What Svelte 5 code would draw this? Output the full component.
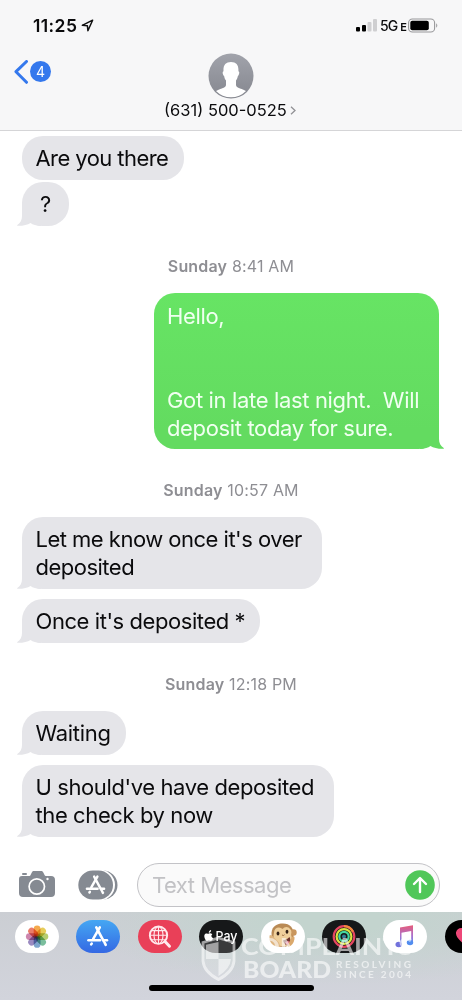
<script>
  const groups = [
    {
      day: '',
      time: '',
      messages: [
        { text: 'Are you there', width: 162, tail: false, spacing: -0.57 },
        { text: '?', width: 47, tail: true, center: true, spacing: 0 }
      ]
    },
    {
      day: 'Sunday',
      time: '8:41 AM',
      messages: [
        {
          text: 'Hello,\n\n\nGot in late last night.  Will\ndeposit today for sure.',
          width: 285,
          tail: true,
          sent: true,
          spacing: -0.35
        }
      ]
    },
    {
      day: 'Sunday',
      time: '10:57 AM',
      messages: [
        { text: "Let me know once it's over\ndeposited", width: 300, tail: true, spacing: -0.51 },
        { text: "Once it's deposited *", width: 238, tail: true, spacing: -0.43 }
      ]
    },
    {
      day: 'Sunday',
      time: '12:18 PM',
      messages: [
        { text: 'Waiting', width: 104, tail: true, spacing: -0.3 },
        { text: "U should've have deposited\nthe check by now", width: 312, tail: true, spacing: -0.4 }
      ]
    }
  ];

  const petals = ['#f29a2e', '#e3c53b', '#a9c455', '#63b38c', '#6797c4', '#8a76b6', '#c4709f', '#e76550'];
</script>

{#snippet storeGlyph()}
  <g fill="none" stroke="#fff" stroke-width="2.6" stroke-linecap="round">
    <path d="M9.3 1.5 16.8 15.5" />
    <path d="M12.8 1.5 6.2 13" />
    <path d="M1.5 14.5H13" />
    <path d="M17.2 14.5H20" />
    <path d="M4.2 18.6 4.7 17.8" />
    <path d="M17.7 17 18.7 19" />
  </g>
{/snippet}

<div class="phone">
  <header class="top">
    <div class="status">
      <div class="clock">
        <span>11:25</span>
        <svg width="13" height="13" viewBox="0 0 13 13">
          <path d="M1.3 6.3 11.6 1.2 6.9 11.7 6.4 6.7Z" fill="none" stroke="#111" stroke-width="1.5" stroke-linejoin="round" />
        </svg>
      </div>
      <div class="indicators">
        <svg class="signal" width="22" height="13" viewBox="0 0 22 13">
          <rect x="0" y="8" width="4" height="4.5" rx="1" />
          <rect x="6" y="6" width="4" height="6.5" rx="1" />
          <rect x="11.5" y="3" width="4" height="9.5" rx="1" fill="#cfcfd1" />
          <rect x="17" y="0" width="4" height="12.5" rx="1" fill="#cfcfd1" />
        </svg>
        <span class="network">5G<small>E</small></span>
        <svg class="battery" width="31" height="15" viewBox="0 0 31 15">
          <rect x=".6" y="1" width="26" height="13" rx="3.8" fill="none" stroke="#98989a" stroke-width="1.1" />
          <rect x="2.3" y="2.8" width="18.5" height="9.4" rx="2" />
          <path d="M28.2 5.2q2.2 2.2 0 4.6z" fill="#98989a" />
        </svg>
      </div>
    </div>
    <div class="contact-row">
      <div class="back">
        <svg width="15" height="24" viewBox="0 0 15 24">
          <path d="M12.5 1.5 2 11.7 12.5 22.3" fill="none" stroke="#3478ed" stroke-width="3" stroke-linecap="round" stroke-linejoin="round" />
        </svg>
        <span class="count">4</span>
      </div>
      <div class="contact">
        <svg width="46" height="46" viewBox="0 0 46 46">
          <defs>
            <linearGradient id="avatar" x2="0" y2="1">
              <stop offset="0" stop-color="#a1a3ab" />
              <stop offset="1" stop-color="#85878f" />
            </linearGradient>
            <clipPath id="avatarClip"><circle cx="23" cy="23" r="21.3" /></clipPath>
          </defs>
          <circle cx="23" cy="23" r="22.5" fill="url(#avatar)" />
          <path
            clip-path="url(#avatarClip)"
            fill="#fff"
            d="M23 9c5.5 0 7.8 3.3 7.4 9.2 1.4.4 1 3.4-.6 5-.4 2.3-1.2 3.4-1.8 4.3v4.3c0 2.5 2.3 3 5 4 3.5 1.2 6 2.5 7.2 4.2L34 47H12L5.8 40c1.2-1.7 3.7-3 7.2-4.2 2.7-1 5-1.5 5-4v-4.3c-.7-.9-1.5-2-1.8-4.3-1.7-1.6-2.1-4.6-.7-5C15.1 12.3 17.5 9 23 9Z"
          />
        </svg>
        <div class="number">
          <span>(631) 500-0525</span>
          <svg width="6" height="9" viewBox="0 0 6 9"><path d="m1 .8 4 3.7-4 3.7" fill="none" stroke="#919195" stroke-width="1.3" /></svg>
        </div>
      </div>
    </div>
  </header>

  <main class="thread">
    {#each groups as group}
      {#if group.day}
        <div class="stamp"><b>{group.day}</b> {group.time}</div>
      {/if}
      <div class="group" class:tight={!group.day}>
        {#each group.messages as message}
          <div
            class="bubble"
            class:sent={message.sent}
            class:center={message.center}
            style="width: {message.width}px; letter-spacing: {message.spacing}px"
          >{message.text}{#if message.tail}<svg class="tail" width="24" height="21" viewBox="0 0 24 21"><path d="M5 0v11C5 15 3.5 18 .3 20c-.4.5-.1.8.3.8 5.400.1 10-.8 12.900-2.800Q17 20.600 24 21V0Z" /></svg>{/if}</div>
        {/each}
      </div>
    {/each}
  </main>

  <div class="composer">
    <svg class="camera" width="36" height="28" viewBox="0 0 36 28">
      <path fill="#858a92" d="M3 6h7c1 0 1.3-.4 1.8-1.5l1-2C13.4 1.3 14 1 15 1h7c1 0 1.7.4 2.3 1.5l1 2C25.8 5.6 26.3 6 27.3 6H32q4 0 4 4v13q0 4-4 4H4q-4 0-4-4V9q0-3 3-3Z" />
      <rect x="3" y="3" width="5" height="2" rx="1" fill="#858a92" />
      <circle cx="17.8" cy="16.5" r="7.7" fill="none" stroke="#fff" stroke-width="1.7" />
      <circle cx="28.5" cy="9" r="1.2" fill="#fff" />
    </svg>
    <svg class="apps" width="40" height="30" viewBox="0 0 40 30">
      <rect x="4" y=".5" width="35.5" height="29" rx="14.5" fill="#858a92" />
      <rect x="0" y="-.5" width="37" height="31" rx="15.5" fill="#fff" />
      <rect x=".3" y=".5" width="34.7" height="29" rx="14.5" fill="#858a92" />
      <g transform="translate(7.5 5.2) scale(.93)">{@render storeGlyph()}</g>
    </svg>
    <div class="field">
      <span>Text Message</span>
      <svg width="30" height="30" viewBox="0 0 30 30">
        <circle cx="15" cy="15" r="14.8" fill="#50c759" />
        <path d="M15 22V8.5M9 14l6-6 6 6" fill="none" stroke="#fff" stroke-width="2.4" stroke-linecap="round" stroke-linejoin="round" />
      </svg>
    </div>
  </div>

  <footer class="drawer">
    <div class="strip">
      <svg class="app white" viewBox="0 0 44 33">
        <g class="petals">
          {#each petals as color, i}
            <rect x="18.7" y="5.4" width="6.8" height="11.2" rx="3.4" fill={color} transform="rotate({i * 45} 22.1 16.6)" />
          {/each}
        </g>
      </svg>
      <svg class="app store" viewBox="0 0 44 33">
        <g transform="translate(11 5.8)">{@render storeGlyph()}</g>
      </svg>
      <svg class="app search" viewBox="0 0 44 33">
        <g fill="none" stroke="#ffe9ec" stroke-width="1.1">
          <circle cx="20.5" cy="15.2" r="8.7" stroke-width="1.9" />
          <ellipse cx="20.5" cy="15.2" rx="4.5" ry="8.5" />
          <path d="M20.5 6.5v17.5M12 15.2h17M13.5 10.6h14M13.5 19.8h14" />
          <path d="m27 21.5 4.5 4.7" stroke-width="3" stroke-linecap="round" />
        </g>
      </svg>
      <svg class="app black" viewBox="0 0 44 33">
        <path fill="#fff" d="M13.3 14.3c-.9-.9-2.4-1.2-3.3-.7-.7.4-1.2.3-1.9 0-1.8-.7-3 .7-2.8 3 .2 2.1 1.5 4.3 2.7 4.3.7 0 1-.4 1.9-.4.8 0 1.1.4 1.8.4 1 0 1.9-1.4 2.4-2.7-2-.8-2.3-3-.8-3.9ZM9.8 12.9c-.1-1.6 1-2.7 2.3-2.9.1 1.5-.8 2.8-2.3 2.9Z" />
        <text x="16.5" y="21" textLength="22" lengthAdjust="spacingAndGlyphs" class="pay">Pay</text>
      </svg>
      <svg class="app white" viewBox="0 0 44 33">
        <path d="M10.500 13C11 6 16 3.500 22 3.500c7 0 10.500 4.500 10.500 10.500 0 7-3 12.500-10 13-7 .2-12-4-12-14Z" fill="#b98a55" />
        <circle cx="32.500" cy="12.500" r="3.200" fill="#c9965c" />
        <path d="M13 12.500q.5-5 5-5 2 0 3.500 1.500 2.500-3 6-1.500 4 2.500 2.500 7 2 5-1 9-4 3.500-9 2.500-6-1-7-7-1-3 0-6.500Z" fill="#efcf9b" />
        <ellipse cx="17" cy="13.500" rx="1.400" ry="2" fill="#332015" />
        <ellipse cx="26" cy="11.800" rx="1.400" ry="2" fill="#332015" />
        <path d="m21 15 1.500.5 1-.8" stroke="#9b6c43" fill="none" />
        <path d="M22 20.500q4-.5 6.500-3.500 2 4-.5 7.500-4 2-6-4Z" fill="#70352d" />
        <path d="M24 23q2-3 4.500-1.500 0 3-2 3.500Z" fill="#df7188" />
        <path d="M8.500 15.500q2-1.500 3.500 1l4 4q3 2 3 6.500-8 0-10.500-7Z" fill="#dfb682" />
        <path d="M31 17q3-2 2.500 2-1 6-6 8-2-1 0-3.500Z" fill="#dba96c" />
      </svg>
      <svg class="app black" viewBox="0 0 44 33">
        <g fill="none" stroke-width="2.2">
          <circle cx="22" cy="16.5" r="10.3" stroke="#e64561" />
          <path d="M22 6.200a10.300 10.300 0 0 1 9 5.500" stroke="#f38c3d" />
          <circle cx="22" cy="16.5" r="7.4" stroke="#d9e33f" />
          <circle cx="22" cy="16.5" r="4.7" stroke="#45d9a0" />
        </g>
        <circle cx="22" cy="16.5" r="2" fill="#347d9a" />
      </svg>
      <svg class="app white" viewBox="0 0 44 33">
        <defs>
          <linearGradient id="note" x2="0" y2="1">
            <stop offset="0" stop-color="#e75c79" />
            <stop offset=".55" stop-color="#a86fce" />
            <stop offset="1" stop-color="#548ff0" />
          </linearGradient>
        </defs>
        <g fill="url(#note)">
          <path d="M17 7.500 30 5.300v17h-1.800V11l-9.700 1.800v12H17Z" />
          <ellipse cx="15.7" cy="24.5" rx="3.2" ry="2.7" fill="#7272dc" />
          <ellipse cx="27" cy="22.5" rx="3.2" ry="2.7" fill="#528def" />
        </g>
      </svg>
      <svg class="app black pure" viewBox="0 0 44 33">
        <path d="M22 27C14 20 10.5 16.5 11 12.5c.6-5 7.5-6.500 11-1.500 3.500-5 10.400-3.500 11 1.500.5 4-3 7.500-11 14.500Z" fill="#ed4778" />
      </svg>
    </div>
    <div class="home"></div>
    <svg class="watermark" width="230" height="56" viewBox="0 0 230 56">
      <path d="M18.5 3 34 7.500V26Q33 37 18.500 44.500 4 37 3 26V7.500Z" fill="#fff" fill-opacity=".25" stroke="#fff" stroke-width="2.800" />
      <path d="M18.5 7v17H6V9.800ZM18.500 24H31q-1 10-12.500 17Z" fill="#fff" />
      <g class="mark">
        <text x="41" y="20" font-size="22" textLength="172" lengthAdjust="spacingAndGlyphs" class="slim">COMPLAINTS</text>
        <text x="43" y="43" font-size="23" textLength="88" lengthAdjust="spacingAndGlyphs">BOARD</text>
        <text x="136" y="32.500" font-size="10" textLength="75" class="slim">RESOLVING</text>
        <text x="136" y="43" font-size="10" textLength="75" class="slim">SINCE 2004</text>
      </g>
    </svg>
  </footer>
</div>

<style>
  :global(body) {
    margin: 0;
    background: #fff;
  }

  .phone {
    width: 462px;
    height: 1000px;
    overflow: hidden;
    display: flex;
    flex-direction: column;
    font-family: Inter, "Liberation Sans", sans-serif;
    color: #0b0b0d;
  }

  svg {
    display: block;
    flex-shrink: 0;
  }

  .top {
    box-sizing: border-box;
    height: 131px;
    flex-shrink: 0;
    background: #f7f7f8;
    border-bottom: 1px solid #d5d5d7;
  }

  .status {
    display: flex;
    justify-content: space-between;
    height: 52px;
    padding: 0 23px 0 33px;
  }

  .clock {
    display: flex;
    align-items: flex-start;
    gap: 4px;
    padding-top: 16px;
    font-size: 17.5px;
    line-height: 20px;
    font-weight: 600;
    letter-spacing: 0.4px;
  }

  .clock svg {
    margin-top: 3px;
  }

  .indicators {
    display: flex;
    align-items: flex-start;
    padding-top: 18px;
  }

  .signal {
    margin: 1px 2px 0 0;
  }

  .network {
    width: 28px;
    font-size: 14px;
    line-height: 16px;
    font-weight: 500;
    letter-spacing: -0.9px;
    white-space: nowrap;
  }

  .network small {
    font-size: 11px;
    font-weight: 600;
    margin-left: 3px;
  }

  .contact-row {
    display: grid;
    grid-template-columns: 80px 1fr 80px;
  }

  .back {
    display: flex;
    align-items: flex-start;
    gap: 1px;
    padding: 8px 0 0 14px;
  }

  .count {
    width: 21px;
    height: 21px;
    margin-top: 1px;
    border-radius: 50%;
    background: #3478ed;
    color: #fff;
    font-size: 14px;
    line-height: 21px;
    text-align: center;
  }

  .contact {
    display: flex;
    flex-direction: column;
    align-items: center;
  }

  .contact > svg {
    margin-top: 1px;
  }

  .number {
    display: flex;
    align-items: center;
    gap: 3px;
    margin: 1px 2px 0 0;
    font-size: 16.5px;
    line-height: 20px;
  }

  .thread {
    box-sizing: border-box;
    height: 726px;
    flex-shrink: 0;
    padding: 5px 22px 0;
  }

  .group {
    display: flex;
    flex-direction: column;
    align-items: flex-start;
    gap: 10px;
  }

  .group.tight {
    gap: 2px;
    margin-bottom: -1px;
  }

  .stamp {
    height: 68px;
    box-sizing: border-box;
    padding-top: 31px;
    text-align: center;
    font-size: 16px;
    line-height: 20px;
    letter-spacing: 0.18px;
    color: #8e8e93;
  }

  .stamp b {
    font-weight: 600;
  }

  .bubble {
    position: relative;
    z-index: 0;
    box-sizing: border-box;
    padding: 8px 13.5px;
    border-radius: 21px;
    background: #e5e5e9;
    font-size: 22px;
    line-height: 28px;
    white-space: pre;
  }

  .bubble.center {
    text-align: center;
  }

  .bubble.sent {
    align-self: flex-end;
    margin-right: 1px;
    padding: 9px 13px 7px;
    background: linear-gradient(#67e464, #63db60 88%);
    color: #f0fff0;
  }

  .tail {
    position: absolute;
    left: -5px;
    bottom: 0;
    z-index: -1;
    fill: #e5e5e9;
  }

  .sent .tail {
    left: auto;
    right: -5px;
    transform: scaleX(-1);
    fill: #63db60;
  }

  .composer {
    display: flex;
    align-items: flex-start;
    height: 55px;
    flex-shrink: 0;
    padding: 6px 22px 0 19px;
    box-sizing: border-box;
  }

  .camera {
    margin: 7px 23px 0 0;
  }

  .apps {
    margin: 7px 19px 0 0;
  }

  .field {
    display: flex;
    align-items: center;
    justify-content: space-between;
    box-sizing: border-box;
    width: 303px;
    height: 44px;
    padding: 0 4px 0 14px;
    border: 1px solid #c3c3c7;
    border-radius: 22px;
    background: #fafafa;
    font-size: 22px;
    letter-spacing: -0.5px;
    color: #c2c2c5;
  }

  .drawer {
    position: relative;
    flex: 1;
    background:
      radial-gradient(ellipse 250px 64px at 72% 10%, #c3d4ce 20%, transparent 100%),
      linear-gradient(#cbced3, #d2d4dc);
  }

  .strip {
    display: flex;
    gap: 17.4px;
    padding: 8px 0 0 15px;
  }

  .app {
    width: 44px;
    height: 33px;
    border-radius: 16.5px;
  }

  .white {
    background: #fff;
  }

  .store {
    background: linear-gradient(#45a7f3, #3468e3);
  }

  .search {
    background: #e94058;
  }

  .black {
    background: #161819;
  }

  .pure {
    background: #000;
  }

  .petals rect {
    mix-blend-mode: multiply;
    opacity: 0.85;
  }

  .pay {
    fill: #fff;
    font-size: 13px;
    font-weight: 500;
  }

  .home {
    width: 165px;
    height: 6px;
    margin: 32px auto 0;
    border-radius: 3px;
    background: #000;
  }

  .watermark {
    position: absolute;
    left: 200px;
    top: 23px;
    opacity: 0.6;
  }

  .mark {
    fill: #fff;
    font-family: Lato, sans-serif;
    font-weight: 900;
  }

  .mark .slim {
    font-weight: 700;
  }
</style>
